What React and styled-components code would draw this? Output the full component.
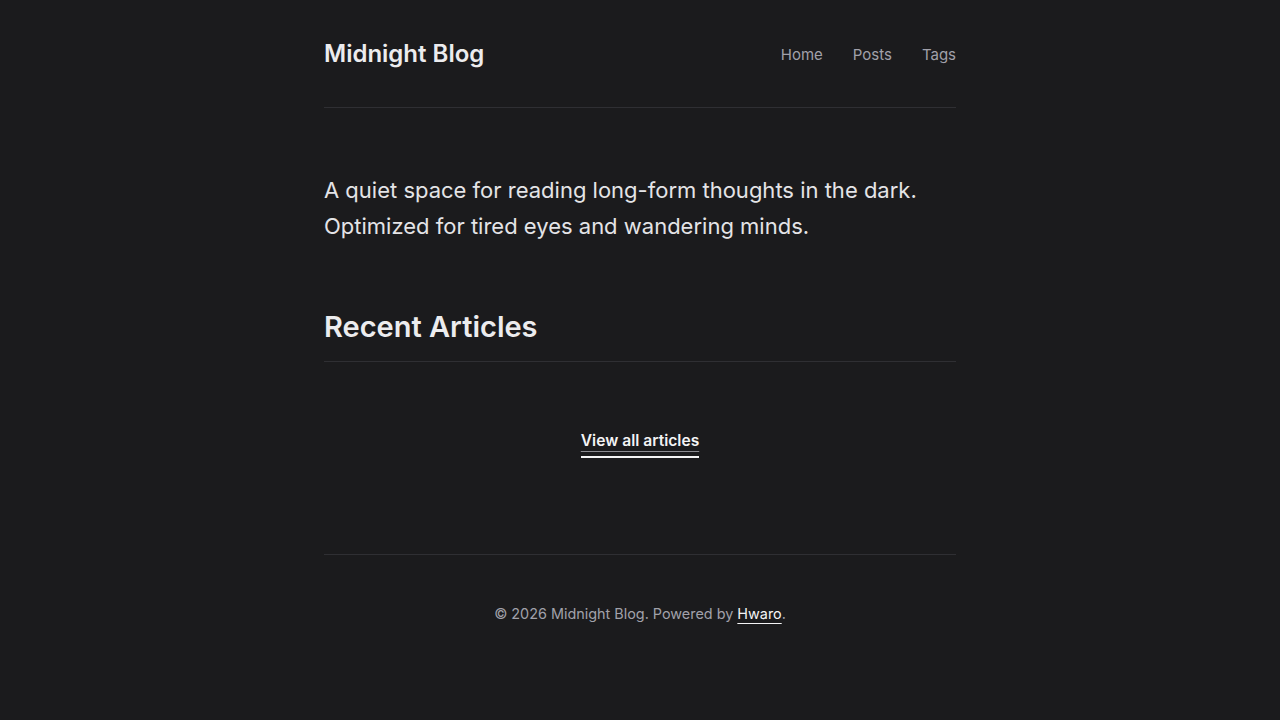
import styled, { createGlobalStyle } from 'styled-components'


const GlobalStyle = createGlobalStyle`
    html, body {
        margin: 0;
        padding: 0;
        background: #1b1b1d;
    }
    body {
        font-family: Inter, "Noto Sans", sans-serif;
        color: #e4e4e7;
    }
`

const App = () => {
    return (
        <>
            <GlobalStyle />
            <Page>
                <Header>
                    <SiteTitle href="#">Midnight Blog</SiteTitle>
                    <Nav>
                        <NavLink href="#">Home</NavLink>
                        <NavLink href="#">Posts</NavLink>
                        <NavLink href="#">Tags</NavLink>
                    </Nav>
                </Header>

                <Intro>
                    A quiet space for reading long-form thoughts in the dark.
                    <br />
                    Optimized for tired eyes and wandering minds.
                </Intro>

                <Section>
                    <SectionTitle>Recent Articles</SectionTitle>
                    <MoreRow>
                        <MoreLink href="#">View all articles</MoreLink>
                    </MoreRow>
                </Section>

                <Footer>
                    © 2026 Midnight Blog. Powered by <FooterLink href="#">Hwaro</FooterLink>.
                </Footer>
            </Page>
        </>
    )
}


const Page = styled.div`
    max-width: 632px;
    margin: 0 auto;
`
const Header = styled.header`
    display: flex;
    align-items: center;
    justify-content: space-between;
    padding: 36px 0 35px;
    border-bottom: 1px solid #2f2f33;
`
const SiteTitle = styled.a`
    font-size: 24px;
    line-height: 36px;
    font-weight: 600;
    color: #ececee;
    text-decoration: none;
`
const Nav = styled.nav`
    display: flex;
    gap: 30px;
`
const NavLink = styled.a`
    font-size: 15px;
    color: #a1a1aa;
    text-decoration: none;
`
const Intro = styled.p`
    margin: 64px 0 0;
    font-size: 22px;
    line-height: 36px;
    color: #e4e4e7;
`
const Section = styled.section`
    margin-top: 65px;
`
const SectionTitle = styled.h2`
    margin: 0;
    font-size: 29px;
    line-height: 36px;
    font-weight: 600;
    color: #ececee;
    padding-bottom: 16px;
    border-bottom: 1px solid #2f2f33;
`
const MoreRow = styled.div`
    display: flex;
    justify-content: center;
    padding: 68px 0 96px;
`
const MoreLink = styled.a`
    font-size: 15.6px;
    line-height: 22px;
    font-weight: 600;
    color: #f4f4f5;
    text-decoration: underline;
    text-decoration-color: #8a8a90;
    text-underline-offset: 5px;
    padding-bottom: 4px;
    border-bottom: 2px solid #f4f4f5;
`
const Footer = styled.footer`
    border-top: 1px solid #2f2f33;
    padding: 49px 0 0;
    text-align: center;
    font-size: 14.4px;
    line-height: 20px;
    color: #a1a1aa;
`
const FooterLink = styled.a`
    color: #f4f4f5;
    text-decoration: underline;
    text-underline-offset: 4px;
`

export default App
